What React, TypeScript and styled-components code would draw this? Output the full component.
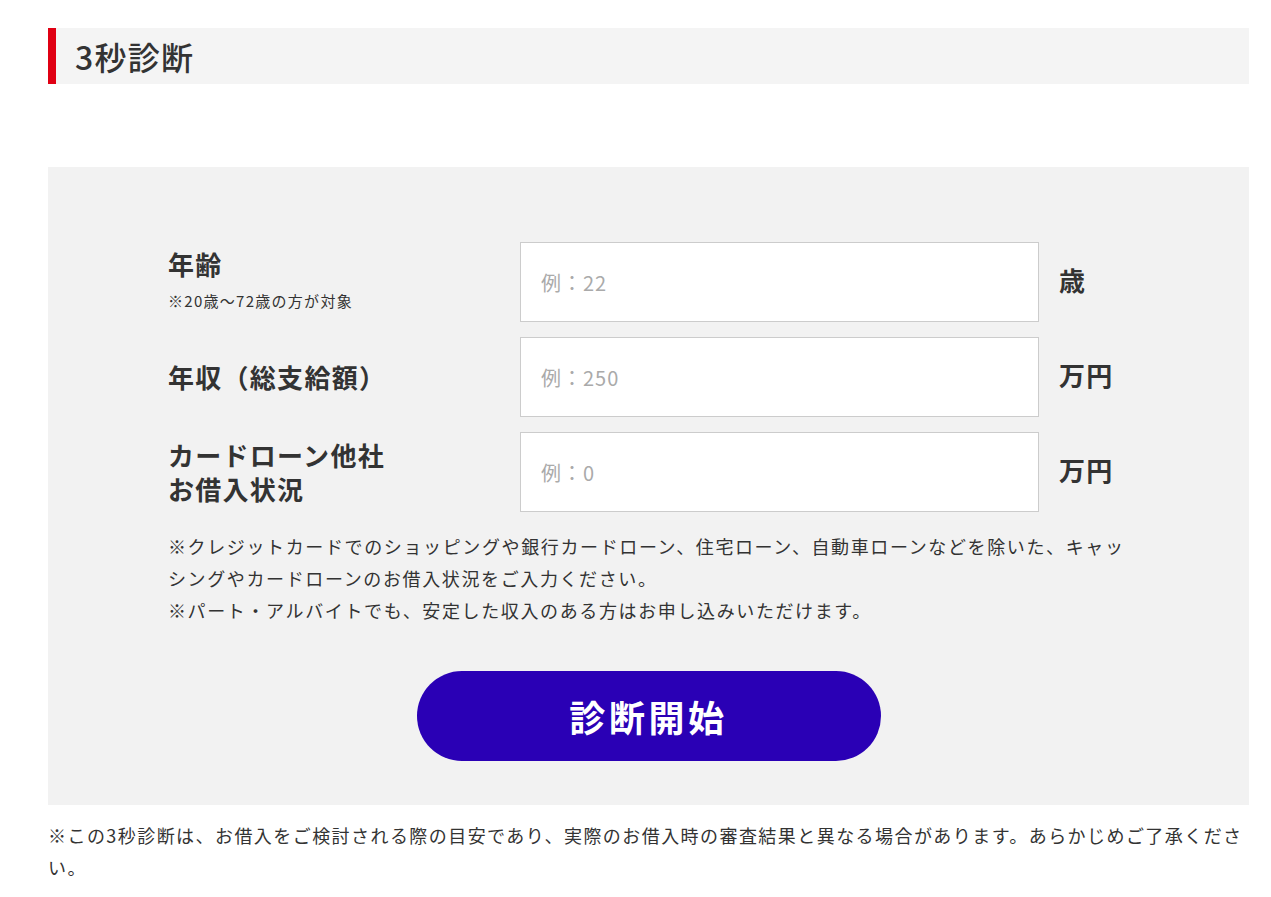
import styled, { createGlobalStyle } from 'styled-components'

const GlobalStyle = createGlobalStyle`
	body {
		margin: 0;
		background: #ffffff;
		color: #333333;
		font-family: 'Noto Sans CJK JP', 'Noto Sans', sans-serif;
		letter-spacing: 0.08em;
	}
	* {
		box-sizing: border-box;
	}
`

const Page = styled.div`
	padding: 28px 22px 40px 48px;
`

const Heading = styled.h2`
	margin: 0;
	height: 56px;
	display: flex;
	align-items: center;
	padding-left: 19px;
	background: #f4f4f4;
	border-left: 8px solid #e00013;
	font-size: 32px;
	font-weight: 500;
	color: #333333;
`

const FormBox = styled.section`
	margin-top: 83px;
	background: #f2f2f2;
	padding: 75px 120px 44px;
`

const Rows = styled.div`
	display: flex;
	flex-direction: column;
	gap: 15px;
`

const Row = styled.div`
	display: grid;
	grid-template-columns: 352px 519px 1fr;
	align-items: center;
`

const LabelBlock = styled.div<{ hasSub?: boolean }>`
	display: flex;
	flex-direction: column;
	gap: 9px;
	padding-bottom: ${(props) => (props.hasSub ? '4px' : '0')};
`

const Label = styled.label`
	font-size: 26px;
	font-weight: 700;
	line-height: 1.3;
`

const SubNote = styled.span`
	font-size: 15px;
	line-height: 1.5;
`

const Input = styled.input`
	height: 80px;
	width: 519px;
	border: 1px solid #cccccc;
	background: #ffffff;
	padding: 0 20px;
	font-family: inherit;
	font-size: 20px;
	letter-spacing: 0.05em;
	color: #333333;
	outline: none;

	&::placeholder {
		color: #aaaaaa;
	}
`

const Unit = styled.span`
	padding: 0 0 6px 20px;
	font-size: 26px;
	font-weight: 700;
	white-space: nowrap;
`

const Notes = styled.div`
	margin-top: 18px;
	font-size: 18px;
	line-height: 32px;
	letter-spacing: 0.09em;
`

const Note = styled.p`
	margin: 0;
`

const ButtonRow = styled.div`
	margin-top: 45px;
	display: flex;
	justify-content: center;
`

const StartButton = styled.button`
	width: 464px;
	height: 90px;
	border: none;
	border-radius: 45px;
	background: #2a00b5;
	color: #ffffff;
	font-family: inherit;
	font-size: 36px;
	font-weight: 700;
	letter-spacing: 0.1em;
	cursor: pointer;
`

const Footnote = styled.p`
	margin: 14px 0 0;
	font-size: 18px;
	line-height: 32px;
	letter-spacing: 0.08em;
`

const fields = [
	{ label: ['年齢'], sub: '※20歳〜72歳の方が対象', placeholder: '例：22', unit: '歳' },
	{ label: ['年収（総支給額）'], placeholder: '例：250', unit: '万円' },
	{ label: ['カードローン他社', 'お借入状況'], placeholder: '例：0', unit: '万円' },
]

export default function App() {
	return (
		<>
			<GlobalStyle />
			<Page>
				<Heading>3秒診断</Heading>
				<FormBox>
					<Rows>
						{fields.map((f, i) => (
							<Row key={i}>
								<LabelBlock hasSub={!!f.sub}>
									<Label>
										{f.label.map((l, j) => (
											<span key={j}>
												{j > 0 && <br />}
												{l}
											</span>
										))}
									</Label>
									{f.sub && <SubNote>{f.sub}</SubNote>}
								</LabelBlock>
								<Input type="text" placeholder={f.placeholder} />
								<Unit>{f.unit}</Unit>
							</Row>
						))}
					</Rows>
					<Notes>
						<Note>
							※クレジットカードでのショッピングや銀行カードローン、住宅ローン、自動車ローンなどを除いた、キャッシングやカードローンのお借入状況をご入力ください。
						</Note>
						<Note>※パート・アルバイトでも、安定した収入のある方はお申し込みいただけます。</Note>
					</Notes>
					<ButtonRow>
						<StartButton type="button">診断開始</StartButton>
					</ButtonRow>
				</FormBox>
				<Footnote>
					※この3秒診断は、お借入をご検討される際の目安であり、実際のお借入時の審査結果と異なる場合があります。あらかじめご了承ください。
				</Footnote>
			</Page>
		</>
	)
}
